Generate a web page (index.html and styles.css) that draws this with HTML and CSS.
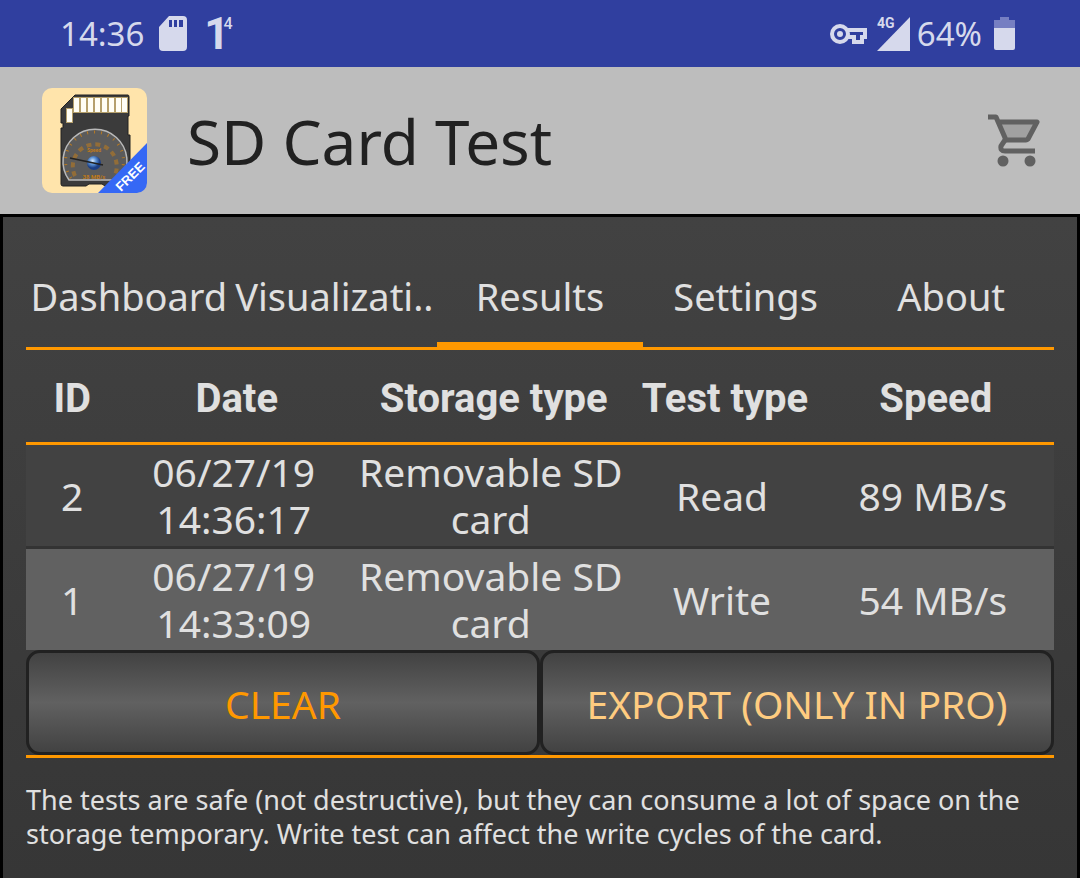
FILE: index.html
```
<!DOCTYPE html>
<html lang="en">
<head>
  <meta charset="UTF-8" />
  <meta name="viewport" content="width=device-width, initial-scale=1.0">
  <title>SD Card Test</title>
  <link rel="stylesheet" href="styles.css">
</head>
<body>
  <div class="status-bar">
    <div class="status-group">
      <span>14:36</span>
      <svg class="status-sd" width="30" height="36" viewBox="0 0 30 36">
        <path fill="currentColor" fill-rule="evenodd" d="M11 0H25Q29 0 29 4V31Q29 35 25 35H5Q1 35 1 31V11ZM11 4V11H14V4ZM16 4V11H19V4ZM21 4V11H25V4Z"/>
      </svg>
      <span class="signal-count">1<sup>4</sup></span>
    </div>
    <div class="status-group">
      <svg class="status-key" width="40" height="24" viewBox="0 0 40 24">
        <circle cx="11" cy="12" r="8" fill="none" stroke="currentColor" stroke-width="4"/>
        <circle cx="11" cy="12" r="3" fill="currentColor"/>
        <path fill="none" stroke="currentColor" stroke-width="4" d="M18 8H36V15H33V20H25V15H18"/>
      </svg>
      <svg class="status-mobile" width="34" height="36" viewBox="0 0 34 36">
        <path fill="currentColor" d="M33 1V35H0Z"/>
        <text x="0" y="12" class="network-label">4G</text>
      </svg>
      <span>64%</span>
      <svg class="status-battery" width="22" height="34" viewBox="0 0 22 34">
        <path fill="#767fc2" d="M6 0H15V3H21V12H0V3H6Z"/>
        <path fill="currentColor" d="M0 11H21V31Q21 33 19 33H2Q0 33 0 31Z"/>
      </svg>
    </div>
  </div>

  <header>
    <svg class="app-logo" width="105" height="105" viewBox="0 0 105 105">
      <defs>
        <clipPath id="logoShape"><rect width="105" height="105" rx="10"/></clipPath>
        <radialGradient id="globe" cx="40%" cy="35%">
          <stop offset="0" stop-color="#dcecff"/>
          <stop offset="0.5" stop-color="#5c93d6"/>
          <stop offset="1" stop-color="#1c3f85"/>
        </radialGradient>
      </defs>
      <g clip-path="url(#logoShape)">
        <rect width="105" height="105" fill="#ffe4ab"/>
        <path fill="#3b3b3b" stroke="#222" d="M33 7H86Q87 7 87 9V28H86V47H88V97Q88 98 86 98H63L60 96H47L44 98H21Q19 98 19 96V40H21V35H19V21Z"/>
        <g fill="#fffef5" stroke="#b5a06c">
          <rect x="24.500" y="20.500" width="6" height="14"/>
          <rect x="31.500" y="9.500" width="6" height="15"/>
          <rect x="38.500" y="9.500" width="6" height="15"/>
          <rect x="45.500" y="9.500" width="6" height="15"/>
          <rect x="52.500" y="9.500" width="6" height="15"/>
          <rect x="59.500" y="9.500" width="6" height="15"/>
          <rect x="66.500" y="9.500" width="6" height="15"/>
          <rect x="73.500" y="9.500" width="6" height="15"/>
          <rect x="79.500" y="9.500" width="6" height="15"/>
        </g>
        <path fill="#5b5b5b" stroke="#b9b9b9" stroke-width="1.500" d="M27 92A32 32 0 1 1 79 92Z"/>
        <g fill="none" stroke="#b87a22">
          <path d="M29 90A29 29 0 1 1 76 90" stroke-dasharray="1 6" stroke-width="3"/>
          <path d="M33 88A22 22 0 1 1 73 87" stroke-dasharray="5 4" stroke-width="4" opacity="0.6"/>
        </g>
        <text x="52" y="64" class="dial-label">Speed</text>
        <text x="52" y="91" class="dial-value">38 MB/s</text>
        <circle cx="52" cy="75" r="7" fill="url(#globe)"/>
        <path stroke="#222" stroke-width="1.500" d="M28 70L61 77"/>
        <path fill="#3568f5" d="M105 55V105H56Z"/>
        <text class="free-label" transform="translate(79 104) rotate(-45)">FREE</text>
      </g>
    </svg>
    <h1>SD Card Test</h1>
    <button class="cart" aria-label="Buy PRO version">
      <svg width="54" height="54" viewBox="0 0 54 54">
        <path fill="#a1a1a1" d="M9 8H49L39 26H18Z"/>
        <path fill="none" stroke="currentColor" stroke-width="5" stroke-linejoin="round" d="M0 3H8L18 26H38Q39 26 40 25L49 8H10"/>
        <path fill="none" stroke="currentColor" stroke-width="5" d="M17 26L13 32Q12 37 17 37H47"/>
        <circle cx="15" cy="47" r="5.500" fill="currentColor"/>
        <circle cx="42" cy="47" r="5.500" fill="currentColor"/>
      </svg>
    </button>
  </header>

  <main>
    <nav class="tabs">
      <a href="#dashboard">Dashboard</a>
      <a href="#visualization">Visualizati..</a>
      <a href="#results" class="active">Results</a>
      <a href="#settings">Settings</a>
      <a href="#about">About</a>
    </nav>

    <table class="results">
      <colgroup>
        <col class="col-id">
        <col class="col-date">
        <col class="col-storage">
        <col class="col-test">
        <col class="col-speed">
      </colgroup>
      <thead>
        <tr><th>ID</th><th>Date</th><th>Storage type</th><th>Test type</th><th>Speed</th></tr>
      </thead>
      <tbody>
        <tr><td>2</td><td>06/27/19 14:36:17</td><td>Removable SD card</td><td>Read</td><td>89 MB/s</td></tr>
        <tr><td>1</td><td>06/27/19 14:33:09</td><td>Removable SD card</td><td>Write</td><td>54 MB/s</td></tr>
      </tbody>
    </table>

    <div class="actions">
      <button>CLEAR</button>
      <button class="pro">EXPORT (ONLY IN PRO)</button>
    </div>

    <p class="note">The tests are safe (not destructive), but they can consume a lot of space on the storage temporary. Write test can affect the write cycles of the card.</p>
  </main>
</body>
</html>
```
FILE: styles.css
```
:root {
  --accent: #ff9800;
  --accent-light: #ffcc80;
  --text-color: #e0e0e0;
  --status-bg: #303f9f;
  --status-text: #d6d9ec;
}

* {
  box-sizing: border-box;
}

body {
  margin: 0;
  min-height: 100vh;
  display: flex;
  flex-direction: column;
  font-family: "Noto Sans", sans-serif;
  font-size: 39px;
  color: var(--text-color);
  background-color: #000;
}

.status-bar {
  display: flex;
  justify-content: space-between;
  align-items: center;
  height: 67px;
  padding: 0 64px 0 60px;
  font-size: 33px;
  line-height: 40px;
  color: var(--status-text);
  background-color: var(--status-bg);
}

.status-group {
  display: flex;
  align-items: center;
}

.status-sd {
  margin-left: 14px;
}

.signal-count {
  margin-left: 16px;
  font-family: Roboto, sans-serif;
  font-size: 44px;
  font-weight: bold;
}

.signal-count sup {
  margin-left: -6px;
  font-size: 16px;
  font-weight: 500;
  line-height: 16px;
  vertical-align: 20px;
}

.status-mobile {
  margin: 0 6px 0 8px;
}

.status-battery {
  margin-left: 12px;
}

.network-label {
  font: bold 14px Roboto, sans-serif;
  fill: currentColor;
}

header {
  display: flex;
  align-items: center;
  height: 147px;
  padding: 0 38px 0 42px;
  color: #212121;
  background-color: #bdbdbd;
}

header h1 {
  flex: 1;
  margin: 0 0 0 40px;
  font-size: 62px;
  font-weight: normal;
  line-height: 80px;
}

.cart {
  display: flex;
  padding: 0;
  border: none;
  background: none;
  color: #616161;
  cursor: pointer;
}

.dial-label,
.dial-value {
  font: bold 5px Roboto, sans-serif;
  fill: #c07a18;
  text-anchor: middle;
}

.dial-value {
  font-size: 6px;
}

.free-label {
  font: bold 13px "Liberation Sans", sans-serif;
  fill: #fff;
}

main {
  flex: 1;
  padding: 24px 23px 24px;
  border: 3px solid #000;
  border-bottom: none;
  background: linear-gradient(#424242, #363636);
}

.tabs {
  display: flex;
  border-bottom: 3px solid var(--accent);
}

.tabs a {
  flex: 1 1 0;
  min-width: 0;
  height: 106px;
  font-size: 38px;
  line-height: 110px;
  text-align: center;
  white-space: nowrap;
  color: inherit;
  text-decoration: none;
}

.tabs a.active {
  border-bottom: 5px solid var(--accent);
}

.results {
  width: 100%;
  table-layout: fixed;
  border-spacing: 0;
  text-align: center;
  line-height: 47px;
}

.col-id { width: 9%; }
.col-date { width: 23%; }
.col-storage { width: 27%; }
.col-test { width: 18%; }
.col-speed { width: 23%; }

.results th {
  height: 95px;
  padding: 4px 0 0;
  font-family: Roboto, "Noto Sans", sans-serif;
  font-size: 40px;
  white-space: nowrap;
  border-bottom: 3px solid var(--accent);
}

.results td {
  padding: 3px 6px 4px 0;
  background-color: #424242;
}

.results td:first-child {
  padding-right: 0;
}

.results tr:first-child td {
  border-bottom: 3px solid #333;
}

.results tr:nth-child(2) td {
  background-color: #616161;
}

.actions {
  display: flex;
  border-bottom: 3px solid var(--accent);
}

.actions button {
  flex: 1 1 0;
  height: 105px;
  border: 3px solid #212121;
  border-radius: 14px;
  padding: 2px 0 0;
  font: inherit;
  color: var(--accent);
  background: linear-gradient(#424242, #616161, #424242);
  cursor: pointer;
}

.actions .pro {
  color: var(--accent-light);
}

.note {
  margin: 25px 0 0;
  font-size: 27px;
  line-height: 34px;
}
```
